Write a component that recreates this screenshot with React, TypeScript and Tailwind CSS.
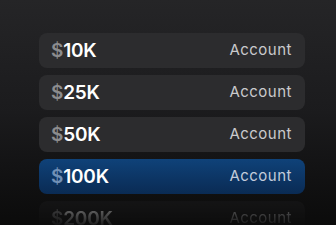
import React from 'react';

interface Plan {
  amount: string;
  active?: boolean;
}

const plans: Plan[] = [
  { amount: '10K' },
  { amount: '25K' },
  { amount: '50K' },
  { amount: '100K', active: true },
];

const PlanRow: React.FC<Plan> = ({ amount, active }) => (
  <div
    className={
      active
        ? 'flex h-[35px] shrink-0 items-center justify-between rounded-lg bg-gradient-to-b from-[#0f4279] to-[#0a2b54] px-3'
        : 'flex h-[35px] shrink-0 items-center justify-between rounded-lg bg-[#2c2c2e] px-3'
    }
  >
    <span className="text-[19px] font-semibold leading-none tracking-[-0.2px] text-white">
      <span className={active ? 'text-[#7190b6]' : 'text-[#8c8c8e]'}>$</span>
      {amount}
    </span>
    <span
      className={
        active
          ? 'pr-px text-[15px] font-normal tracking-[0.5px] text-[#c3ccda]'
          : 'pr-px text-[15px] font-normal tracking-[0.5px] text-[#cacacc]'
      }
    >
      Account
    </span>
  </div>
);

export default function App() {
  return (
    <div
      className="flex h-[225px] w-[336px] flex-col gap-[7px] overflow-hidden bg-gradient-to-b from-[#252527] via-[#1b1b1d] to-[#0b0b0b] pl-[39px] pr-[31px] pt-[33px]"
      style={{ fontFamily: 'Inter, "Noto Sans", sans-serif' }}
    >
      {plans.map((p) => (
        <PlanRow key={p.amount} {...p} />
      ))}
      {/* faded row below the list */}
      <div className="flex h-[35px] shrink-0 items-center justify-between rounded-lg bg-[#1a1a1b] px-3 opacity-50 [mask-image:linear-gradient(to_bottom,black,transparent_80%)]">
        <span className="text-[19px] font-semibold leading-none tracking-[-0.2px] text-white">
          <span className="text-[#8c8c8e]">$</span>200K
        </span>
        <span className="pr-px text-[15px] font-normal tracking-[0.5px] text-[#cacacc]">Account</span>
      </div>
    </div>
  );
}
